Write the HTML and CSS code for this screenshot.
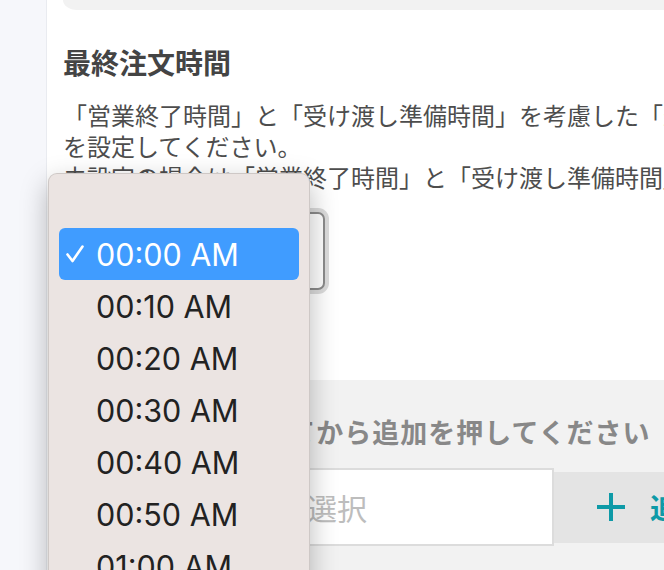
FILE: index.html
```html
<!DOCTYPE html>
<html lang="ja">
<head>
<meta charset="utf-8">
<title>最終注文時間</title>
<link rel="stylesheet" href="styles.css">
</head>
<body>
<div class="app">
  <aside class="sidebar"></aside>
  <main class="main">
    <div class="topcard"></div>
    <section class="field">
      <h2 class="field-title">最終注文時間</h2>
      <p class="field-desc">「営業終了時間」と「受け渡し準備時間」を考慮した「最終注文時間」<br>を設定してください。<br>未設定の場合は「営業終了時間」と「受け渡し準備時間」から自動で計算されます。</p>
      <div class="select"></div>
    </section>
    <section class="panel">
      <p class="panel-hint">時間を選択してから追加を押してください</p>
      <div class="add-row">
        <div class="input">受付時間を選択</div>
        <button class="add-btn" type="button">
          <svg class="plus" width="28" height="28" viewBox="0 0 28 28"><path d="M14 0V28M0 14H28" stroke="currentColor" stroke-width="4" fill="none"/></svg>
          <span>追加</span>
        </button>
      </div>
    </section>
  </main>
  <div class="popup">
    <div class="opt selected"><span class="check"><svg width="18" height="18" viewBox="0 0 18 18"><path d="M1.5 9.5L6.5 16L16.5 1.5" stroke="#fff" stroke-width="2.6" fill="none" stroke-linecap="round" stroke-linejoin="round"/></svg></span>00:00 AM</div>
    <div class="opt"><span class="check"></span>00:10 AM</div>
    <div class="opt"><span class="check"></span>00:20 AM</div>
    <div class="opt"><span class="check"></span>00:30 AM</div>
    <div class="opt"><span class="check"></span>00:40 AM</div>
    <div class="opt"><span class="check"></span>00:50 AM</div>
    <div class="opt"><span class="check"></span>01:00 AM</div>
  </div>
</div>
</body>
</html>
```
FILE: styles.css
```css
html, body {
  margin: 0;
  padding: 0;
}
body {
  width: 664px;
  height: 570px;
  overflow: hidden;
  background: #fff;
  font-family: "Noto Sans CJK JP", "Noto Sans", sans-serif;
}
.app {
  position: relative;
  display: flex;
  width: 664px;
  height: 570px;
  overflow: hidden;
}
.sidebar {
  flex: 0 0 46px;
  background: #f6f7fb;
  border-right: 1px solid #e9ebf0;
}
.main {
  flex: 1;
  min-width: 0;
  padding-left: 16px;
  display: flex;
  flex-direction: column;
}
.topcard {
  height: 10px;
  background: #f2f2f2;
  border-bottom-left-radius: 14px 10px;
}
.field {
  padding-top: 34px;
}
.field-title {
  margin: 0;
  font-size: 28px;
  line-height: 36px;
  font-weight: 700;
  color: #444;
  letter-spacing: 0;
  white-space: nowrap;
}
.field-desc {
  margin: 19px 0 0;
  font-size: 24px;
  line-height: 31px;
  color: #4d4d4d;
  white-space: nowrap;
}
.select {
  margin-top: 20px;
  width: 258px;
  height: 74px;
  border: 2px solid #8c8c8c;
  border-radius: 7px;
  box-shadow: 0 0 0 4px #dcdcdc;
  background: #fff;
}
.panel {
  margin-top: 90px;
  flex: 1;
  background: #f2f2f2;
  padding: 34px 0 0 58px;
}
.panel-hint {
  margin: 0;
  font-size: 27px;
  line-height: 36px;
  letter-spacing: 1px;
  font-weight: 700;
  color: #888;
  white-space: nowrap;
}
.add-row {
  margin-top: 18px;
  margin-left: 4px;
  display: flex;
  align-items: center;
}
.input {
  flex: 0 0 auto;
  box-sizing: border-box;
  width: 429px;
  height: 78px;
  border: 2px solid #dcdcdc;
  background: #fff;
  padding-left: 30px;
  display: flex;
  align-items: center;
  font-size: 30px;
  color: #bdbdbd;
  white-space: nowrap;
  overflow: hidden;
}
.add-btn {
  flex: 0 0 auto;
  height: 71px;
  border: 0;
  margin: 0;
  padding: 0 40px 0 43px;
  background: #e4e4e4;
  display: flex;
  align-items: center;
  gap: 25px;
  color: #0e9aa7;
  font-family: "Noto Sans CJK JP", sans-serif;
  font-size: 28px;
  font-weight: 700;
  white-space: nowrap;
}
.plus {
  display: block;
}
.popup {
  position: absolute;
  left: 48px;
  top: 173px;
  width: 262px;
  height: 440px;
  box-sizing: border-box;
  padding: 54px 10px 0;
  background: #ebe4e2;
  border-radius: 9px;
  border: 1px solid rgba(0, 0, 0, 0.12);
  box-shadow: 0 10px 28px rgba(0, 0, 0, 0.28);
  font-family: Inter, "Liberation Sans", sans-serif;
}
.opt {
  height: 52px;
  display: flex;
  align-items: center;
  padding-left: 7px;
  font-size: 30.5px;
  color: #222;
  border-radius: 6px;
  white-space: nowrap;
}
.opt.selected {
  background: #409cff;
  color: #fff;
}
.check {
  flex: 0 0 30px;
  display: flex;
  align-items: center;
}
.check svg {
  display: block;
}
```
